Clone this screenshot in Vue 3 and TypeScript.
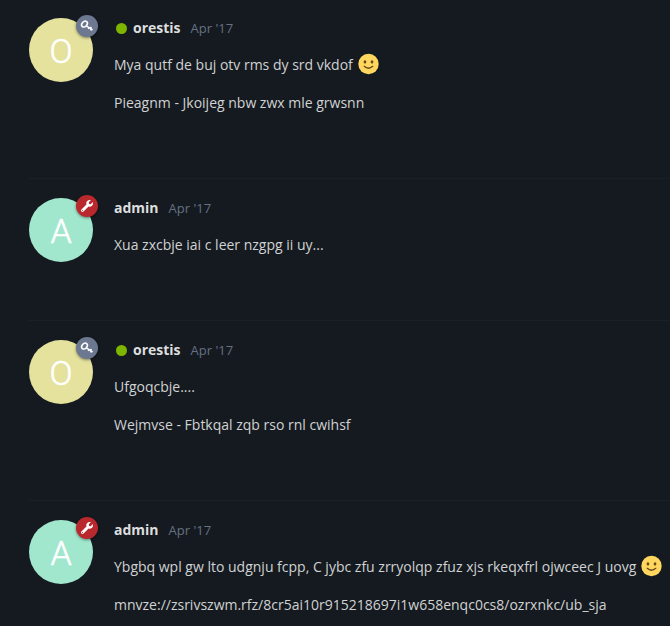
<script setup lang="ts">
interface Paragraph {
  text: string
  smile?: boolean
}

interface Post {
  id: number
  user: 'orestis' | 'admin'
  date: string
  paragraphs: Paragraph[]
}

const posts: Post[] = [
  {
    id: 1,
    user: 'orestis',
    date: "Apr '17",
    paragraphs: [
      { text: 'Mya qutf de buj otv rms dy srd vkdof', smile: true },
      { text: 'Pieagnm - Jkoijeg nbw zwx mle grwsnn' },
    ],
  },
  { id: 2, user: 'admin', date: "Apr '17", paragraphs: [{ text: 'Xua zxcbje iai c leer nzgpg ii uy...' }] },
  {
    id: 3,
    user: 'orestis',
    date: "Apr '17",
    paragraphs: [{ text: 'Ufgoqcbje....' }, { text: 'Wejmvse - Fbtkqal zqb rso rnl cwihsf' }],
  },
  {
    id: 4,
    user: 'admin',
    date: "Apr '17",
    paragraphs: [
      { text: 'Ybgbq wpl gw lto udgnju fcpp, C jybc zfu zrryolqp zfuz xjs rkeqxfrl ojwceec J uovg', smile: true },
      { text: 'mnvze://zsrivszwm.rfz/8cr5ai10r915218697i1w658enqc0cs8/ozrxnkc/ub_sja' },
    ],
  },
]
</script>

<template>
  <main class="stream">
    <article v-for="post in posts" :key="post.id" class="post">
      <div class="avatar" :class="post.user">
        <span class="letter">{{ post.user.charAt(0).toUpperCase() }}</span>
        <span class="flair">
          <svg v-if="post.user === 'orestis'" width="14" height="14" viewBox="0 0 14 14" fill="none" stroke="#fff">
            <ellipse cx="4.5" cy="5.1" rx="3.3" ry="2.4" transform="rotate(-50 4.5 5.1)" stroke-width="1.6" />
            <path d="M6.3 6.9 12.6 10.9M9 8.6 8.3 10M11.3 10 10.5 11.3M10.4 9.5 11.4 7.8" stroke-width="1.4" />
          </svg>
          <svg v-else width="12" height="12" viewBox="0 0 512 512" fill="#fff">
            <path
              d="M507.7 109.1c-2.2-9-13.5-12.1-20.1-5.5l-74.4 74.4-67.9-11.3-11.3-67.9 74.4-74.4c6.6-6.6 3.4-17.9-5.7-20.2-47.4-11.7-99.6 1-136.6 38-39.6 39.6-50.5 97.1-34.1 147.2L18.7 402.8c-25 25-25 65.5 0 90.5s65.5 25 90.5 0l213.2-213.2c50.1 16.7 107.5 5.7 147.4-34.2 37.1-37.1 49.7-89.3 37.9-136.8zM64 472c-13.2 0-24-10.8-24-24s10.7-24 24-24 24 10.7 24 24-10.7 24-24 24z"
            />
          </svg>
        </span>
      </div>
      <div class="content">
        <header class="meta">
          <span v-if="post.user === 'orestis'" class="online"></span>
          <strong class="name">{{ post.user }}</strong>
          <span class="date">{{ post.date }}</span>
        </header>
        <p v-for="paragraph in post.paragraphs" :key="paragraph.text" class="line">
          <span>{{ paragraph.text }}</span>
          <svg v-if="paragraph.smile" class="smile" width="21" height="22" viewBox="0 0 22 22">
            <circle cx="11" cy="11" r="10.7" fill="#ffd65e" />
            <ellipse cx="7.3" cy="8.8" rx="1.4" ry="1.8" fill="#65471b" />
            <ellipse cx="14.7" cy="8.8" rx="1.4" ry="1.8" fill="#65471b" />
            <path d="M6.5 13.4Q11 17.5 15.5 13.4" fill="none" stroke="#65471b" stroke-width="1.3" stroke-linecap="round" />
          </svg>
        </p>
      </div>
    </article>
  </main>
</template>

<style>
body {
  background: #151a20;
  overflow: hidden;
}
</style>

<style scoped>
.stream {
  box-sizing: border-box;
  height: 626px;
  overflow: hidden;
  padding-left: 29px;
  background: #151a20;
  color: #d0d2d3;
  font-family: 'Open Sans', sans-serif;
  font-size: 14px;
  line-height: 22px;
}

.post {
  display: flex;
  align-items: flex-start;
  gap: 21px;
  padding-top: 19px;
  border-top: 1px solid #1b2024;
}

.post:first-child {
  padding-top: 18px;
  border-top: 0;
}

.avatar {
  position: relative;
  display: flex;
  flex: none;
  align-items: center;
  justify-content: center;
  width: 64px;
  height: 64px;
  border-radius: 50%;
}

.avatar.orestis {
  background: #e5e29e;
}

.avatar.admin {
  background: #a1e7ce;
}

.letter {
  padding-top: 2px;
  color: #fff;
  font-family: Roboto, sans-serif;
  font-size: 34px;
  font-weight: 300;
  line-height: 62px;
  -webkit-text-stroke: 0.5px #fff;
}

.flair {
  position: absolute;
  top: -3px;
  right: -5px;
  display: flex;
  align-items: center;
  justify-content: center;
  width: 22px;
  height: 22px;
  border-radius: 50%;
  box-shadow: 0 1px 3px rgba(0, 0, 0, 0.45);
}

.orestis .flair {
  background: #6b7890;
}

.admin .flair {
  background: #b9282d;
}

.content {
  min-width: 0;
  padding-bottom: 64px;
}

.meta {
  display: flex;
  align-items: center;
  height: 20px;
  margin-bottom: 16px;
}

.online {
  width: 11px;
  height: 11px;
  margin: 1px 6px 0 2px;
  border-radius: 50%;
  background: #7db500;
}

.name {
  color: #dcdedf;
  font-weight: 700;
}

.date {
  margin-left: 10px;
  color: #667080;
  font-size: 13px;
}

.line {
  display: flex;
  align-items: center;
  gap: 5px;
  height: 22px;
  margin: 0 0 16px;
  white-space: nowrap;
}

.line:last-child {
  margin-bottom: 0;
}

.smile {
  flex: none;
  position: relative;
  top: -1.5px;
}
</style>
